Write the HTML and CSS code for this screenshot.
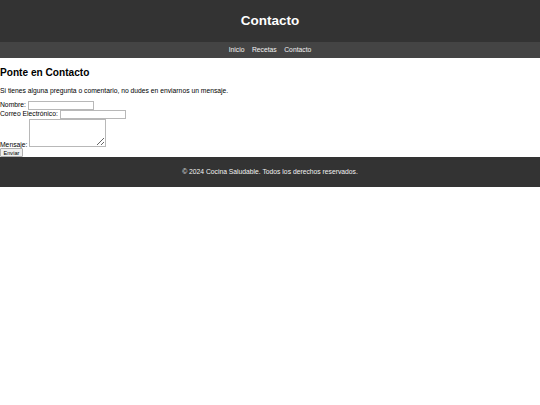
FILE: index.html
```html
<!DOCTYPE html>
<html lang="es">
<head>
<meta charset="utf-8">
<title>Contacto</title>
<link rel="stylesheet" href="styles.css">
</head>
<body>
<header class="site-header">
  <h1 class="site-title">Contacto</h1>
</header>
<nav class="site-nav">
  <a class="nav-link" href="#">Inicio</a>
  <a class="nav-link" href="#">Recetas</a>
  <a class="nav-link" href="#">Contacto</a>
</nav>
<main class="content">
  <h2 class="section-title">Ponte en Contacto</h2>
  <p class="intro">Si tienes alguna pregunta o comentario, no dudes en enviarnos un mensaje.</p>
  <form class="contact-form">
    <label for="nombre">Nombre:</label>
    <input type="text" id="nombre" class="field"><br>
    <label for="correo">Correo Electrónico:</label>
    <input type="email" id="correo" class="field"><br>
    <label for="mensaje">Mensaje:</label>
    <textarea id="mensaje" class="message" rows="4"></textarea><br>
    <button type="submit" class="submit">Enviar</button>
  </form>
</main>
<footer class="site-footer">
  <p class="copyright">&copy; 2024 Cocina Saludable. Todos los derechos reservados.</p>
</footer>
</body>
</html>
```

FILE: styles.css
```css
body {
  margin: 0;
  padding: 0;
  font-family: "Liberation Sans", Arial, sans-serif;
  font-size: 6.75px;
  line-height: 1.15;
  color: #000;
  background: #fff;
}

.site-header {
  background: #333;
  color: #fff;
  text-align: center;
  padding: 4.22px 0;
}

.site-title {
  font-size: 13.5px;
  line-height: 1.15;
  margin: 9.05px 0;
}

.site-nav {
  display: flex;
  justify-content: center;
  gap: 7.5px;
  background: #444;
  padding: 4.22px 0;
}

.nav-link {
  color: #f2f2f2;
  text-decoration: none;
}

.section-title {
  font-size: 10.125px;
  line-height: 1.15;
  margin: 8.4px 0;
}

.intro {
  margin: 6.75px 0;
}

.contact-form {
  margin: 0;
}

.field,
.message,
.submit {
  font-family: "Liberation Sans", Arial, sans-serif;
  font-size: 5.625px;
  line-height: 1.15;
  box-sizing: border-box;
  margin: 0;
}

.field {
  width: 66.7px;
  height: 8.9px;
  padding: 0.4px 1px;
  border: 1px solid #b8b8b8;
  background: #fff;
}

.message {
  width: 77px;
  height: 27.8px;
  padding: 0.8px 1px;
  border: 1px solid #b8b8b8;
  background: #fff;
}

.submit {
  padding: 0.4px 2.5px;
  height: 8.4px;
  border: 1px solid #b0b0b0;
  border-radius: 1px;
  background: #efefef;
  color: #000;
}

.site-footer {
  background: #333;
  color: #f2f2f2;
  text-align: center;
  padding: 4.22px 0;
}

.copyright {
  margin: 6.75px 0;
}
```
